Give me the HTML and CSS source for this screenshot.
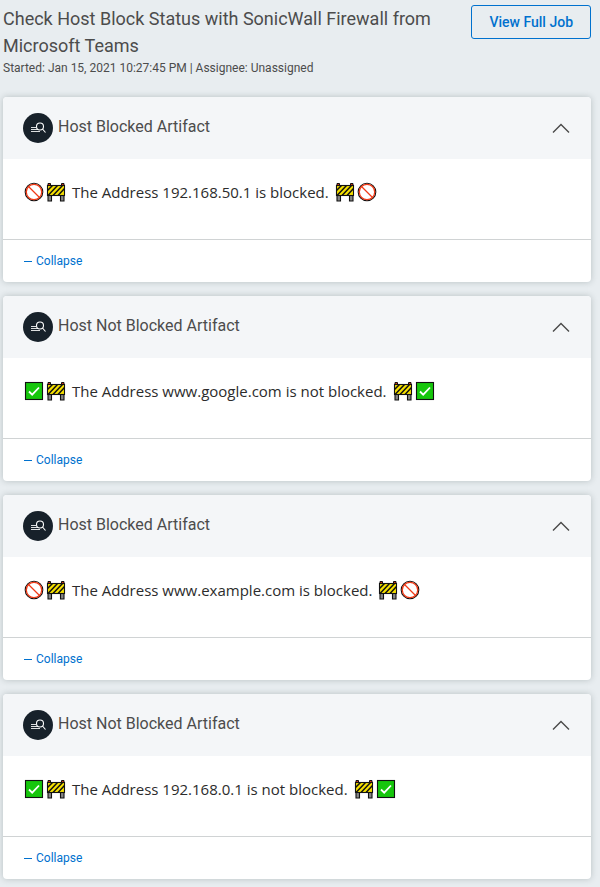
FILE: index.html
```html
<!DOCTYPE html>
<html lang="en">
<head>
<meta charset="utf-8">
<meta name="viewport" content="width=device-width, initial-scale=1">
<title>Check Host Block Status</title>
<link rel="stylesheet" href="styles.css">
</head>
<body>
<svg class="defs" aria-hidden="true">
  <symbol id="search-list" viewBox="0 0 30 30">
    <circle cx="15" cy="15" r="15" fill="#17212a"/>
    <g fill="none" stroke="#fff">
      <path d="M8 14.500h5M8 16.500h7M8 18.500h9" stroke-opacity=".85"/>
      <circle cx="17" cy="13.500" r="3.500" stroke-width="1.100"/>
      <path d="M19.500 16l3 3.500" stroke-width="1.100"/>
    </g>
  </symbol>
  <symbol id="chevron" viewBox="0 0 20 11">
    <path d="M2 9.500l8-8 8 8" fill="none" stroke="#484848" stroke-width="1.400"/>
  </symbol>
  <symbol id="prohibited" viewBox="0 0 20 20">
    <circle cx="10" cy="10" r="8.800" fill="#fff" stroke="#111" stroke-width="1.100"/>
    <circle cx="10" cy="10" r="7.700" fill="none" stroke="#f03a17" stroke-width="1.300"/>
    <path d="M4.500 4.500l11 11" stroke="#f03a17" stroke-width="1.200"/>
  </symbol>
  <symbol id="check" viewBox="0 0 20 20">
    <rect x="1.500" y="1.500" width="17" height="17" fill="#16c60c" stroke="#111" stroke-width="1.100"/>
    <path d="M5 10.500l3.200 3.200 6.800-7.200" fill="none" stroke="#fff" stroke-width="1.800"/>
  </symbol>
  <symbol id="barrier" viewBox="0 0 20 20">
    <path d="M2 1.500h2.500v2H2zM15.500 1.500H18v2h-2.500z" fill="#e53518" stroke="#111" stroke-width="1"/>
    <path d="M2 13.500h3.500V19H2zM14.500 13.500H18V19h-3.500z" fill="#858585" stroke="#111" stroke-width="1.100"/>
    <rect x="1.500" y="3.500" width="17" height="10" fill="#f5e000"/>
    <path d="M1.500 8.500l5-5M2 13.500l9.500-10M7 13.500l9.500-10M12 13.500l6.500-7" fill="none" stroke="#111" stroke-width="1.500"/>
    <rect x="1.500" y="3.500" width="17" height="10" fill="none" stroke="#111" stroke-width="1.100"/>
  </symbol>
</svg>

<header class="job">
  <div class="job-info">
    <h1>Check Host Block Status with SonicWall Firewall from Microsoft Teams</h1>
    <p>Started: Jan 15, 2021 10:27:45 PM | Assignee: Unassigned</p>
  </div>
  <button class="view-job" type="button">View Full Job</button>
</header>

<main class="cards">
  <section class="card">
    <div class="card-head">
      <svg class="badge" aria-hidden="true"><use href="#search-list"/></svg>
      <h2>Host Blocked Artifact</h2>
      <button class="toggle" type="button" aria-label="Toggle card"><svg aria-hidden="true"><use href="#chevron"/></svg></button>
    </div>
    <div class="message">
      <span class="emojis"><svg aria-hidden="true"><use href="#prohibited"/></svg><svg aria-hidden="true"><use href="#barrier"/></svg></span>
      <p>The Address 192.168.50.1 is blocked.</p>
      <span class="emojis"><svg aria-hidden="true"><use href="#barrier"/></svg><svg aria-hidden="true"><use href="#prohibited"/></svg></span>
    </div>
    <div class="card-foot"><button class="collapse" type="button">Collapse</button></div>
  </section>

  <section class="card">
    <div class="card-head">
      <svg class="badge" aria-hidden="true"><use href="#search-list"/></svg>
      <h2>Host Not Blocked Artifact</h2>
      <button class="toggle" type="button" aria-label="Toggle card"><svg aria-hidden="true"><use href="#chevron"/></svg></button>
    </div>
    <div class="message">
      <span class="emojis"><svg aria-hidden="true"><use href="#check"/></svg><svg aria-hidden="true"><use href="#barrier"/></svg></span>
      <p>The Address www.google.com is not blocked.</p>
      <span class="emojis"><svg aria-hidden="true"><use href="#barrier"/></svg><svg aria-hidden="true"><use href="#check"/></svg></span>
    </div>
    <div class="card-foot"><button class="collapse" type="button">Collapse</button></div>
  </section>

  <section class="card">
    <div class="card-head">
      <svg class="badge" aria-hidden="true"><use href="#search-list"/></svg>
      <h2>Host Blocked Artifact</h2>
      <button class="toggle" type="button" aria-label="Toggle card"><svg aria-hidden="true"><use href="#chevron"/></svg></button>
    </div>
    <div class="message">
      <span class="emojis"><svg aria-hidden="true"><use href="#prohibited"/></svg><svg aria-hidden="true"><use href="#barrier"/></svg></span>
      <p>The Address www.example.com is blocked.</p>
      <span class="emojis"><svg aria-hidden="true"><use href="#barrier"/></svg><svg aria-hidden="true"><use href="#prohibited"/></svg></span>
    </div>
    <div class="card-foot"><button class="collapse" type="button">Collapse</button></div>
  </section>

  <section class="card">
    <div class="card-head">
      <svg class="badge" aria-hidden="true"><use href="#search-list"/></svg>
      <h2>Host Not Blocked Artifact</h2>
      <button class="toggle" type="button" aria-label="Toggle card"><svg aria-hidden="true"><use href="#chevron"/></svg></button>
    </div>
    <div class="message">
      <span class="emojis"><svg aria-hidden="true"><use href="#check"/></svg><svg aria-hidden="true"><use href="#barrier"/></svg></span>
      <p>The Address 192.168.0.1 is not blocked.</p>
      <span class="emojis"><svg aria-hidden="true"><use href="#barrier"/></svg><svg aria-hidden="true"><use href="#check"/></svg></span>
    </div>
    <div class="card-foot"><button class="collapse" type="button">Collapse</button></div>
  </section>
</main>
</body>
</html>
```
FILE: styles.css
```css
* {
  box-sizing: border-box;
}

body {
  margin: 0;
  padding: 5px 9px 8px 3px;
  background: #e8edf0;
  color: #4c4c4c;
  font-family: Roboto, sans-serif;
}

h1,
h2,
p {
  margin: 0;
  font-weight: 400;
}

button {
  font-family: inherit;
  background: none;
  border: 0;
  padding: 0;
  cursor: pointer;
}

.defs {
  display: none;
}

.job {
  display: flex;
  align-items: flex-start;
  gap: 24px;
  margin-bottom: 20px;
}

.job-info {
  flex: 1;
}

.job h1 {
  font-size: 18px;
  line-height: 27px;
}

.job p {
  font-size: 12px;
  line-height: 18px;
}

.view-job {
  height: 34px;
  padding: 0 17px;
  border: 1px solid #0071ce;
  border-radius: 3px;
  color: #0071ce;
  font-size: 14px;
  font-weight: 500;
}

.cards {
  display: grid;
  gap: 14px;
}

.card {
  border-radius: 4px;
  background: #fff;
  box-shadow: 0 0 6px rgba(40, 60, 60, 0.25);
}

.card-head {
  display: flex;
  align-items: center;
  gap: 5px;
  height: 62px;
  padding: 0 20px;
  border-radius: 4px 4px 0 0;
  background: #f4f6f8;
}

.badge {
  width: 30px;
  height: 30px;
}

.card-head h2 {
  flex: 1;
  padding-bottom: 3px;
  font-size: 16px;
  line-height: 24px;
}

.toggle svg {
  display: block;
  width: 20px;
  height: 11px;
}

.message {
  display: flex;
  align-items: flex-start;
  gap: 6px;
  min-height: 80px;
  padding: 21px;
  color: #2c2c2c;
  font-family: "Open Sans", sans-serif;
  font-size: 15px;
  line-height: 24px;
}

.emojis {
  display: flex;
  align-items: center;
  gap: 2px;
  height: 24px;
}

.emojis svg {
  width: 20px;
  height: 20px;
}

.card-foot {
  display: flex;
  align-items: center;
  height: 43px;
  padding: 0 21px;
  border-top: 1px solid #d0d3d4;
}

.collapse {
  display: flex;
  align-items: center;
  gap: 4px;
  color: #0071ce;
  font-size: 12px;
  line-height: 18px;
}

.collapse::before {
  content: "";
  width: 8px;
  height: 1px;
  background: currentColor;
}
```
